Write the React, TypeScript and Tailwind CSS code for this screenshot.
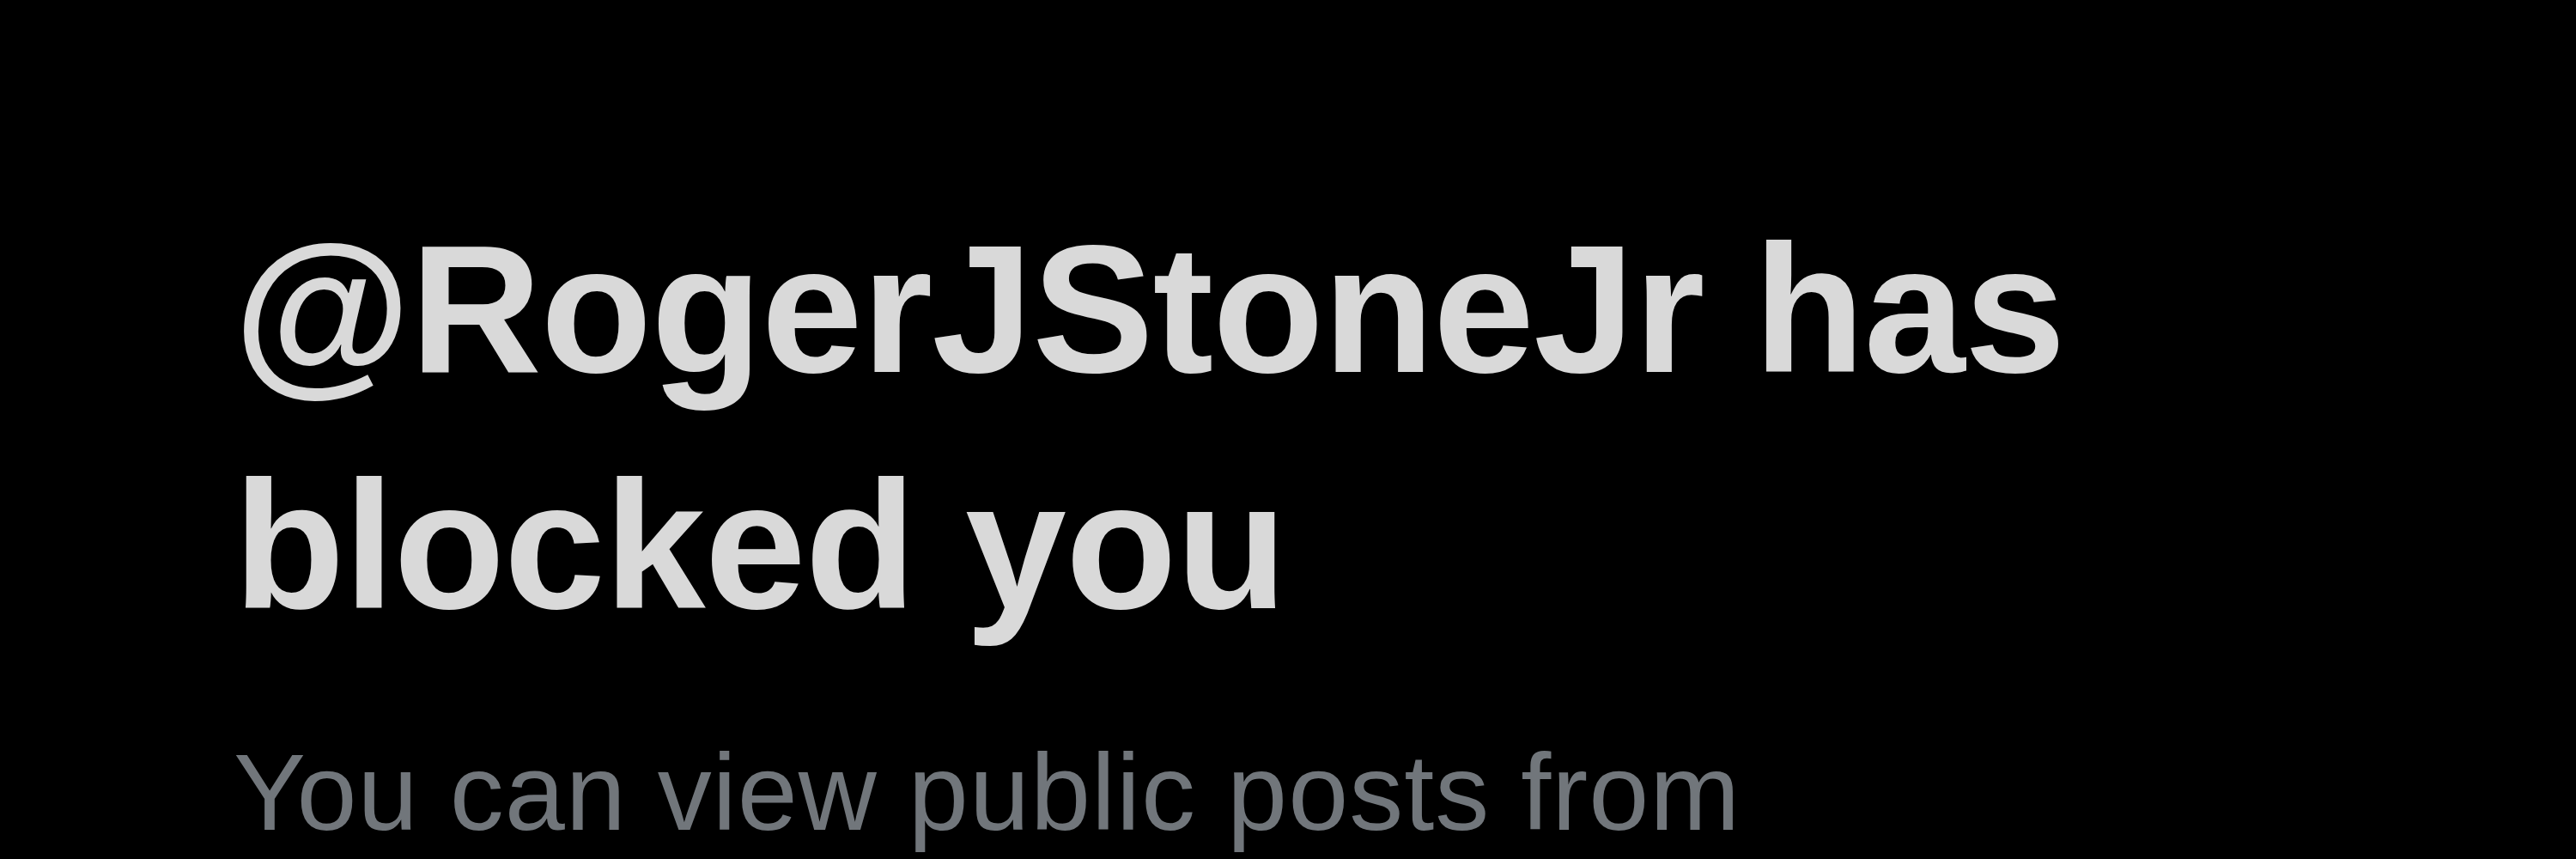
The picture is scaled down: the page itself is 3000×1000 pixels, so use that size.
export default function App() {
  return (
    <div className="min-h-screen w-full overflow-hidden bg-black">
      <div className="w-[2600px] pl-[272px] pt-[222px]" style={{ fontFamily: '"Liberation Sans", Arial, sans-serif' }}>
        <h1 className="text-[212px] font-bold leading-[275px] tracking-[-1px] text-[#d9d9d9]">
          @RogerJStoneJr has blocked you
        </h1>
        <p className="mt-[71px] text-[126px] leading-[160px] tracking-[1px] text-[#71767b]">
          You can view public posts from @RogerJStoneJr, but you can’t engage with them.
        </p>
      </div>
    </div>
  );
}
